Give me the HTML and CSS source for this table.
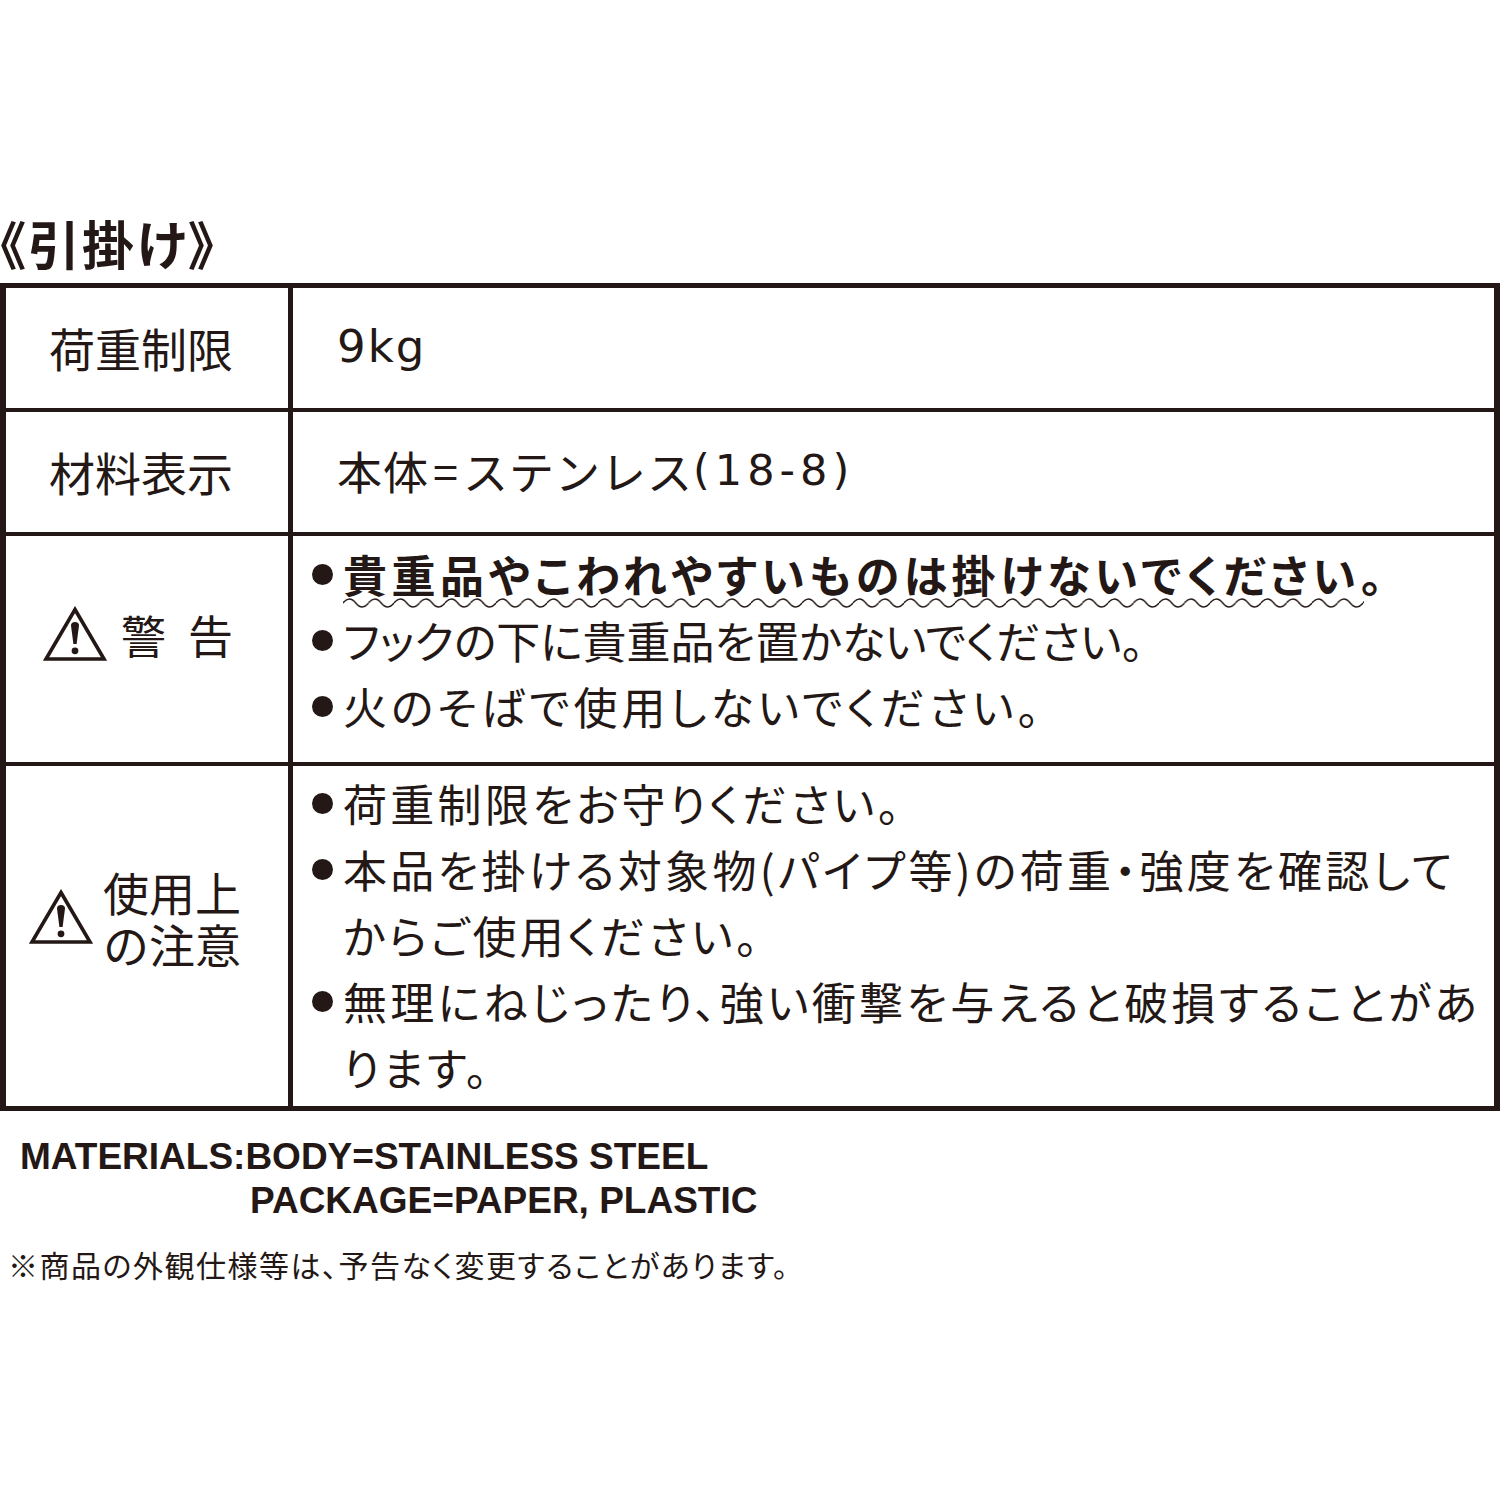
FILE: index.html
```html
<!DOCTYPE html>
<html lang="ja">
<head>
<meta charset="utf-8">
<title>引掛け</title>
<link rel="stylesheet" href="styles.css">
</head>
<body>
<main class="page">
  <h1 class="title">《引掛け》</h1>
  <div class="spec">
    <div class="label">荷重制限</div>
    <div class="value"><span class="lat lat-kg">9kg</span></div>

    <div class="label">材料表示</div>
    <div class="value">本体<span class="eq">=</span>ステンレス<span class="lat">(18-8)</span></div>

    <div class="label label-warn">
      <svg class="tri" viewBox="0 0 64 56" width="64" height="56" aria-hidden="true">
        <polygon points="32,3.5 61,53 3,53" fill="none" stroke="#231815" stroke-width="3.6" stroke-linejoin="miter"/>
        <path d="M28 19.5 Q28 16 32 16 Q36 16 36 19.5 L33.6 38 L30.4 38 Z" fill="#231815"/>
        <circle cx="32" cy="44.8" r="3.4" fill="#231815"/>
      </svg>
      <span class="warn-text"><span>警</span><span>告</span></span>
    </div>
    <div class="list list-warn">
      <div class="item bold"><span class="dot"></span><span class="txt ls-w1">貴重品やこわれやすいものは掛けないでください。</span>
        <svg class="wave" width="1021" height="12" aria-hidden="true"><defs><pattern id="w" x="0" y="0" width="25.5" height="12" patternUnits="userSpaceOnUse"><path d="M0 6 Q6.375 -2 12.75 6 Q19.125 14 25.5 6" fill="none" stroke="#231815" stroke-width="1.5"/></pattern></defs><rect width="1021" height="12" fill="url(#w)"/></svg>
      </div>
      <div class="item"><span class="dot"></span><span class="txt">フックの下に貴重品を置かないでください。</span></div>
      <div class="item"><span class="dot"></span><span class="txt ls-w3">火のそばで使用しないでください。</span></div>
    </div>

    <div class="label label-care">
      <svg class="tri" viewBox="0 0 64 56" width="64" height="56" aria-hidden="true">
        <polygon points="32,3.5 61,53 3,53" fill="none" stroke="#231815" stroke-width="3.6" stroke-linejoin="miter"/>
        <path d="M28 19.5 Q28 16 32 16 Q36 16 36 19.5 L33.6 38 L30.4 38 Z" fill="#231815"/>
        <circle cx="32" cy="44.8" r="3.4" fill="#231815"/>
      </svg>
      <span class="care-text"><span class="care-line">使用上</span><span class="care-line">の注意</span></span>
    </div>
    <div class="list list-care">
      <div class="item"><span class="dot"></span><span class="txt ls-c">荷重制限をお守りください。</span></div>
      <div class="item"><span class="dot"></span><span class="txt ls-c">本品を掛ける対象物(パイプ等)の荷重・強度を確認して<br>からご使用ください。</span></div>
      <div class="item"><span class="dot"></span><span class="txt ls-c">無理にねじったり、強い衝撃を与えると破損することがあ<br>ります。</span></div>
    </div>
  </div>

  <div class="materials">
    <div class="mat-line">MATERIALS:BODY=STAINLESS STEEL</div>
    <div class="mat-line mat-indent">PACKAGE=PAPER, PLASTIC</div>
  </div>
  <p class="note">※商品の外観仕様等は、予告なく変更することがあります。</p>
</main>
</body>
</html>
```

FILE: styles.css
```css
* { box-sizing: border-box; }

html, body {
  margin: 0;
  padding: 0;
  background: #ffffff;
}

body {
  color: #231815;
  font-family: "Noto Sans CJK JP", "Noto Sans", sans-serif;
}

.page {
  width: 1500px;
  padding-top: 212px;
}

.title {
  margin: 0 0 9px 0;
  font-size: 52px;
  line-height: 62px;
  font-weight: 700;
  font-feature-settings: "palt";
  letter-spacing: 2px;
}

.spec {
  display: grid;
  grid-template-columns: 282px 1fr;
  grid-template-rows: 120px 120px 226px 340px;
  column-gap: 5px;
  row-gap: 4px;
  padding: 5px 6px;
  background: #231815;
}

.spec > div {
  background: #ffffff;
}

.label {
  display: flex;
  align-items: center;
  justify-content: center;
  font-size: 46px;
  line-height: 1;
  padding-right: 12px;
  padding-bottom: 2px;
}

.value {
  display: flex;
  align-items: center;
  padding-left: 44px;
  font-size: 45px;
  line-height: 1;
  padding-bottom: 4px;
  letter-spacing: 1px;
}

.value .lat {
  font-family: "DejaVu Sans", "Noto Sans", sans-serif;
  font-size: 43px;
  letter-spacing: 5px;
}

.value .lat-kg {
  font-size: 45px;
  letter-spacing: 2px;
}

.value .eq {
  margin: 0 4px;
}

.label-warn {
  gap: 14px;
  padding-right: 18px;
  padding-bottom: 30px;
}

.warn-text {
  display: flex;
  gap: 22px;
  font-size: 45px;
}

.label-care {
  gap: 10px;
  padding-right: 24px;
  padding-bottom: 38px;
}

.care-text {
  display: flex;
  flex-direction: column;
  font-size: 46px;
  line-height: 52px;
}

.list {
  padding-left: 19px;
  font-size: 44px;
  line-height: 66px;
  font-feature-settings: "palt";
}

.list-warn { padding-top: 5px; }
.list-care { padding-top: 4px; }

.item {
  display: flex;
  align-items: flex-start;
  position: relative;
}

.dot {
  flex: none;
  width: 21px;
  height: 21px;
  margin-top: 23px;
  margin-right: 10px;
  border-radius: 50%;
  background: #231815;
}

.txt {
  white-space: nowrap;
}

.bold .txt {
  font-weight: 700;
}

.ls-w1 { letter-spacing: 4.5px; }
.ls-w3 { letter-spacing: 3.9px; }
.ls-c { letter-spacing: 3.3px; }

.wave {
  position: absolute;
  left: 31px;
  top: 56px;
  width: 1021px;
  height: 12px;
}

.materials {
  margin-top: 24px;
  padding-left: 20px;
  font-family: "Liberation Sans", Arial, sans-serif;
  font-weight: 700;
  font-size: 37px;
  line-height: 44px;
  letter-spacing: 0;
}

.mat-line {
  white-space: nowrap;
}

.mat-indent {
  padding-left: 230px;
}

.note {
  margin: 21px 0 0 8px;
  font-size: 30px;
  line-height: 40px;
  font-feature-settings: "palt";
  letter-spacing: 1.5px;
}
```
